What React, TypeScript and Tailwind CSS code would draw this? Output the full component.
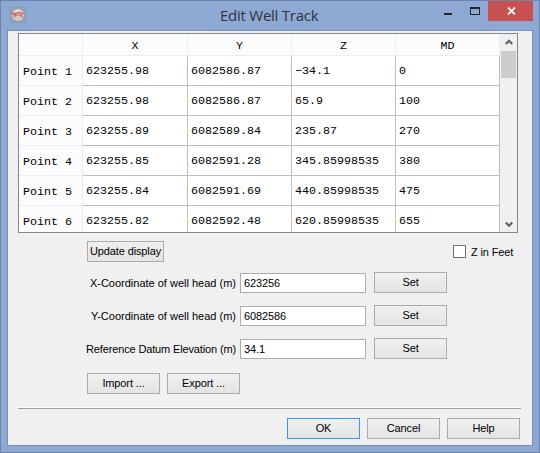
import React from "react";

const columns = ["X", "Y", "Z", "MD"];

const points = [
  ["623255.98", "6082586.87", "\u221234.1", "0"],
  ["623255.98", "6082586.87", "65.9", "100"],
  ["623255.89", "6082589.84", "235.87", "270"],
  ["623255.85", "6082591.28", "345.85998535", "380"],
  ["623255.84", "6082591.69", "440.85998535", "475"],
  ["623255.82", "6082592.48", "620.85998535", "655"],
];

const fields = [
  { label: "X-Coordinate of well head (m)", value: "623256", spacing: "tracking-[0px]" },
  { label: "Y-Coordinate of well head (m)", value: "6082586", spacing: "tracking-[0px]" },
  { label: "Reference Datum Elevation (m)", value: "34.1", spacing: "tracking-[-0.14px]" },
];

const grid = "grid grid-cols-[64px_105px_104px_104px_104px]";

function Button({
  children,
  width = "w-[73px]",
  primary = false,
}: {
  children: React.ReactNode;
  width?: string;
  primary?: boolean;
}) {
  return (
    <button
      className={`flex h-[21px] shrink-0 items-center justify-center border bg-linear-to-b from-[#f0f0f0] to-[#e4e4e4] pb-px tracking-[-0.12px] whitespace-pre ${width} ${
        primary ? "border-[#3399ff]" : "border-[#acacac]"
      }`}
    >
      {children}
    </button>
  );
}

function AppIcon() {
  return (
    <svg width="16" height="16" viewBox="0 0 16 16" className="mt-[6px] ml-[9px]">
      <rect x="0.5" y="0.5" width="15" height="15" fill="#93a3c4" stroke="#8799bb" />
      <circle cx="8" cy="8" r="7" fill="#a19d9e" />
      <circle cx="8" cy="8" r="6" fill="#cbc8c6" />
      <path d="M3.5 4.5 Q8 0.6 12.5 4.5 Z" fill="#e2dfdc" />
      <path d="M1.5 6.5 H5.5 L9 5.5 L14 6.5 M4.5 10 L6 7 M3 8 H12 M11 7 L12 10.5" fill="none" stroke="#e0525a" strokeWidth="1.2" />
    </svg>
  );
}

function TitleBar() {
  return (
    <header className="flex h-[29px] shrink-0 items-start">
      <div className="w-[219px]">
        <AppIcon />
      </div>
      <h1 className="w-[224px] pt-[3px] font-['Open_Sans','Noto_Sans',sans-serif] text-[15px] leading-[22px] tracking-[-0.25px] whitespace-pre text-[#30343c]">
        Edit Well Track
      </h1>
      <div className="mt-[12px] h-[2px] w-[8px] bg-[#22252b]" />
      <div className="mt-[6px] ml-[18px] h-[8px] w-[10px] border border-t-2 border-[#22252b]" />
      <div className="ml-[8px] flex h-[20px] w-[45px] items-center justify-center bg-[#c75050]">
        <svg width="9" height="8" viewBox="0 0 9 8" className="ml-px">
          <path d="M1 0.5 L8 7.5 M8 0.5 L1 7.5" stroke="#fff" strokeWidth="1.8" />
        </svg>
      </div>
    </header>
  );
}

function TrackTable() {
  return (
    <div className="ml-[10px] flex h-[200px] w-[500px] shrink-0 overflow-hidden border border-[#828790] bg-white font-['Liberation_Mono','Courier_New',monospace] text-[11.67px]">
      <div className="w-[481px] shrink-0">
        <div className={`${grid} h-[22px] bg-[#fcfcfc]`}>
          <div className="border-r border-b border-[#e5effb]" />
          {columns.map((name) => (
            <div key={name} className="flex items-center justify-center border-r border-b border-[#e5effb] pt-[3px]">
              {name}
            </div>
          ))}
        </div>
        {points.map((row, i) => (
          <div key={i} className={`${grid} h-[30px] leading-[29px] whitespace-pre`}>
            <div className="h-[30px] border-r border-b border-[#e5effb] bg-[#fcfcfc] pt-[2px] pl-[4px] leading-[27px]">
              <div className="h-[27px] pt-px">Point {i + 1}</div>
            </div>
            {row.map((value, j) => (
              <div key={j} className="h-[30px] border-r border-b border-[#bebebe] pt-px pl-[3px]">
                <div className="h-[28px]">{value}</div>
              </div>
            ))}
          </div>
        ))}
      </div>
      <div className="flex w-[17px] flex-col items-center bg-[#f0f0f0]">
        <svg width="8" height="7" viewBox="0 0 8 7" className="mt-[5px] shrink-0">
          <path d="M0.8 5 L4 1.8 L7.2 5" fill="none" stroke="#606060" strokeWidth="2.1" />
        </svg>
        <div className="mt-[5px] h-[27px] w-[15px] shrink-0 bg-[#cdcdcd]" />
        <svg width="8" height="7" viewBox="0 0 8 7" className="mt-auto mb-[4px] shrink-0">
          <path d="M0.8 1.6 L4 4.8 L7.2 1.6" fill="none" stroke="#606060" strokeWidth="2.1" />
        </svg>
      </div>
    </div>
  );
}

export default function App() {
  return (
    <div className="flex h-[453px] w-[540px] flex-col border border-[#6c83aa] bg-[#8ca8d3] font-['Liberation_Sans',Arial,sans-serif] text-[11px] leading-[13px] text-black">
      <TitleBar />
      <main className="mx-[6px] flex h-[416px] flex-col border border-[#7690bb] bg-[#f0f0f0] pt-[2px]">
        <TrackTable />
        <div className="mt-[8px] flex h-[21px] items-center pl-[79px]">
          <Button width="w-[77px]">Update display</Button>
          <label className="ml-[289px] flex items-center gap-[5px] whitespace-pre">
            <span className="h-[13px] w-[13px] border border-[#707070] bg-white" />
            <span className="pt-px tracking-[-0.15px]">Z in Feet</span>
          </label>
        </div>
        <div className="mt-[10px] flex flex-col gap-[12px]">
          {fields.map((field) => (
            <div key={field.label} className="flex h-[21px] items-start">
              <div className={`w-[228px] pt-[5px] text-right whitespace-pre ${field.spacing}`}>{field.label}</div>
              <div className="mt-px ml-[4px] h-[20px] w-[126px] border border-[#abadb3] bg-white pt-[3px] pl-[3px] tracking-[-0.1px]">
                {field.value}
              </div>
              <div className="ml-[8px]">
                <Button>Set</Button>
              </div>
            </div>
          ))}
        </div>
        <div className="mt-[14px] flex gap-[7px] pl-[79px]">
          <Button>Import ...</Button>
          <Button>Export ...</Button>
        </div>
        <div className="mt-[13px] ml-[10px] h-[2px] w-[503px] shrink-0 border-t border-b border-t-white border-b-[#a0a0a0]" />
        <div className="mt-[9px] flex gap-[7px] pl-[279px]">
          <Button primary>OK</Button>
          <Button>Cancel</Button>
          <Button>Help</Button>
        </div>
      </main>
    </div>
  );
}
